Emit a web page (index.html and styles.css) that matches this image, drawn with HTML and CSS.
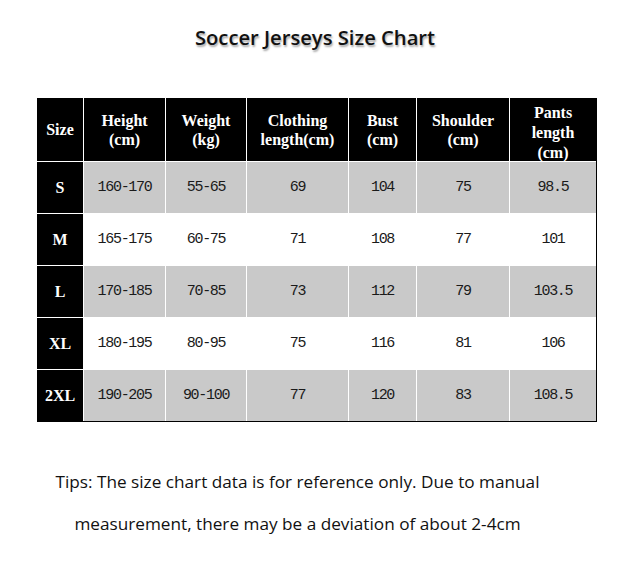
FILE: index.html
```html
<!DOCTYPE html>
<html>
<head>
<meta charset="utf-8">
<link rel="stylesheet" href="styles.css">
</head>
<body>
<div class="page">
  <h1 class="title">Soccer Jerseys Size Chart</h1>
  <div class="chart">
    <div class="hd">Size</div>
    <div class="hd">Height<br>(cm)</div>
    <div class="hd">Weight<br>(kg)</div>
    <div class="hd">Clothing<br>length(cm)</div>
    <div class="hd">Bust<br>(cm)</div>
    <div class="hd">Shoulder<br>(cm)</div>
    <div class="hd hd3">Pants<br>length<br>(cm)</div>

    <div class="sz">S</div>
    <div class="c g">160-170</div><div class="c g">55-65</div><div class="c g">69</div><div class="c g">104</div><div class="c g">75</div><div class="c g">98.5</div>

    <div class="sz">M</div>
    <div class="c">165-175</div><div class="c">60-75</div><div class="c">71</div><div class="c">108</div><div class="c">77</div><div class="c">101</div>

    <div class="sz">L</div>
    <div class="c g">170-185</div><div class="c g">70-85</div><div class="c g">73</div><div class="c g">112</div><div class="c g">79</div><div class="c g">103.5</div>

    <div class="sz">XL</div>
    <div class="c">180-195</div><div class="c">80-95</div><div class="c">75</div><div class="c">116</div><div class="c">81</div><div class="c">106</div>

    <div class="sz">2XL</div>
    <div class="c g">190-205</div><div class="c g">90-100</div><div class="c g">77</div><div class="c g">120</div><div class="c g">83</div><div class="c g">108.5</div>
  </div>
  <p class="tips">Tips: The size chart data is for reference only. Due to manual<br>measurement, there may be a deviation of about 2-4cm</p>
</div>
</body>
</html>
```
FILE: styles.css
```css
html, body {
  margin: 0;
  padding: 0;
  background: #fff;
}
.page {
  width: 637px;
  display: flex;
  flex-direction: column;
}
.title {
  margin: 24px 0 0 0;
  font-family: "Open Sans", sans-serif;
  font-weight: 600;
  font-size: 20.2px;
  line-height: 26px;
  text-align: center;
  color: #111;
  text-shadow: 1px 2px 2px rgba(0,0,0,0.35);
  padding-right: 7px;
}
.chart {
  margin: 48px 0 0 37px;
  width: 559px;
  display: grid;
  grid-template-columns: 46px 81px 80px 101px 67px 92px 86px;
  grid-template-rows: 63px repeat(5, 51px);
  gap: 1px;
  background: #fff;
  border-right: 1px solid #000;
  border-bottom: 1px solid #000;
}
.hd, .sz {
  background: #000;
  color: #fff;
  font-family: "Liberation Serif", serif;
  font-weight: bold;
  font-size: 16px;
  line-height: 19px;
  display: flex;
  align-items: center;
  justify-content: center;
  text-align: center;
}
.hd3 {
  padding-top: 6px;
  line-height: 20px;
}
.c {
  background: #fff;
  color: #1a1a1a;
  font-family: "Liberation Mono", monospace;
  font-size: 15px;
  letter-spacing: -1.3px;
  display: flex;
  align-items: center;
  justify-content: center;
}
.c.g {
  background: #c9c9c9;
}
.tips {
  margin: 39px 0 0 0;
  padding-right: 42px;
  font-family: "Open Sans", sans-serif;
  font-size: 17.2px;
  line-height: 42px;
  text-align: center;
  color: #111;
}
```
